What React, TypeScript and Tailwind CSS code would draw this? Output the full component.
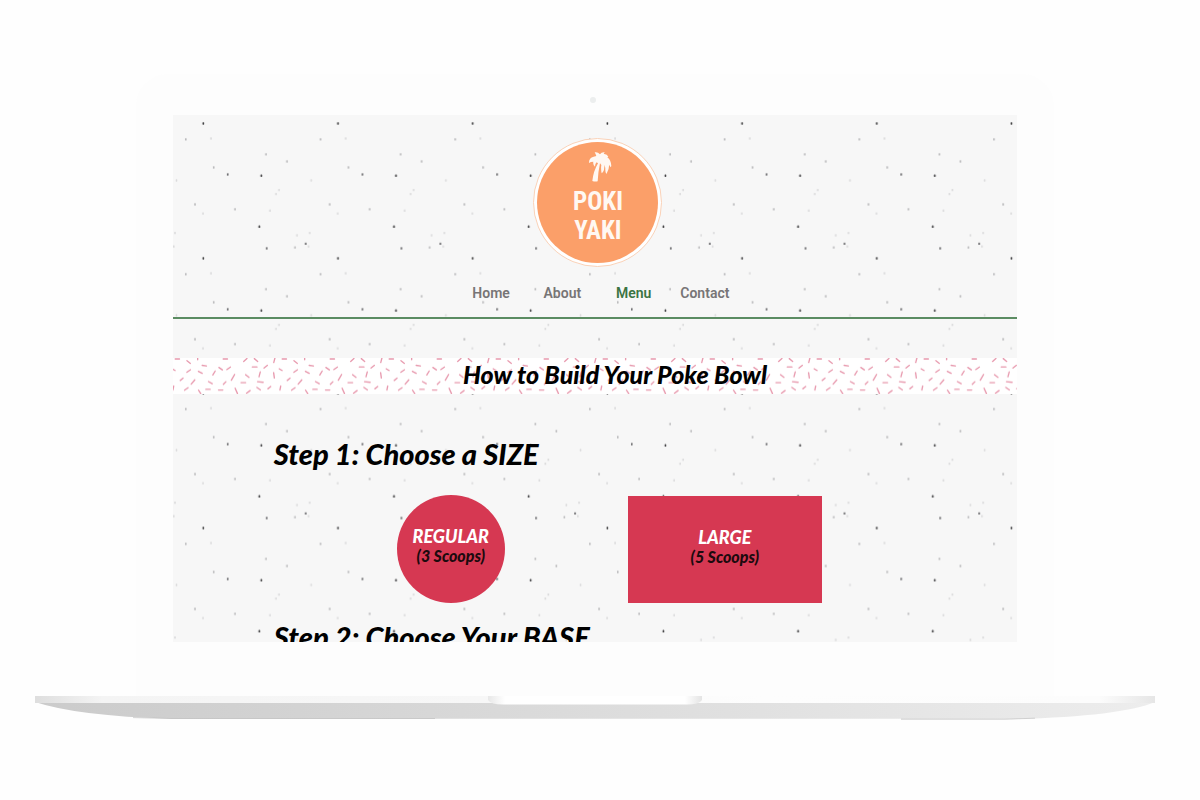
import React from "react";

type Dot = [x: number, y: number, color: string];

const DARK = "#39393b";
const MID = "#666669";
const SOFT = "#b8b8ba";
const FAINT = "#dadadb";

const dots: Dot[] = [
  [30.3, 8.5, DARK], [88.3, 60.7, DARK], [86.3, 111.7, DARK],
  [93.7, 133.3, MID], [132.7, 128.7, MID], [54.7, 59.5, MID],
  [12.8, 24.3, SOFT], [93, 39.3, SOFT], [114, 46.5, SOFT], [22, 89.4, SOFT],
  [62, 94.3, SOFT], [122, 132.5, SOFT], [40.7, 52.5, SOFT],
  [38, 23.5, FAINT], [3.5, 65.5, FAINT], [106, 75, FAINT], [103, 79, FAINT],
  [97, 95.7, FAINT], [30, 98.5, FAINT], [124, 120.3, FAINT], [2, 118, FAINT], [0.8, 131.5, FAINT],
];

type Sprinkle = [x: number, y: number, angle: number, length: number];

// Positions on a 321 x 112 tile, angles in degrees.
const sprinkles: Sprinkle[] = [
  [13, 3, 0, 13], [47, 12, 38, 13], [74, 2, 90, 6], [2, 35, 30, 10], [47, 39, -35, 13],
  [94, 23, 8, 13], [82, 43, 28, 13], [123, 45, -58, 14], [143, 32, 35, 13], [157, 3, 0, 13],
  [167, 31, -35, 13], [26, 64, -38, 11], [60, 72, -50, 17], [112, 74, 30, 13], [155, 75, -45, 11],
  [180, 58, -60, 20], [40, 93, -35, 13], [80, 102, 58, 13], [105, 94, 0, 13], [143, 96, 0, 13],
  [190, 99, 66, 18], [1, 90, -78, 12], [322, 90, -78, 12], [323, 35, 30, 10], [217, 6, -42, 13],
  [249, 6, 40, 13], [245, 27, 0, 14], [278, 26, -38, 13], [304, 7, -76, 14], [223, 54, 38, 13],
  [260, 49, -75, 15], [303, 52, 82, 16], [211, 74, 0, 14], [262, 72, 6, 17], [226, 102, -38, 14],
  [257, 92, 35, 13], [289, 89, -38, 11],
];

function Speckles() {
  return (
    <svg className="absolute inset-0 h-full w-full" aria-hidden="true">
      <defs>
        <pattern id="speckles" width="134.7" height="134.85" patternUnits="userSpaceOnUse">
          {dots.map(([x, y, color], i) => (
            <rect key={i} x={x - 0.8} y={y - 1.2} width="1.6" height="2.4" rx="0.4" fill={color} />
          ))}
        </pattern>
      </defs>
      <rect width="100%" height="100%" fill="url(#speckles)" />
    </svg>
  );
}

function Sprinkles() {
  return (
    <svg className="absolute inset-0 h-full w-full" aria-hidden="true">
      <defs>
        <pattern id="sprinkles" width="321" height="112" patternUnits="userSpaceOnUse" patternTransform="scale(0.3333)">
          {sprinkles.map(([x, y, angle, length], i) => (
            <line
              key={i}
              x1={-length / 2}
              x2={length / 2}
              transform={`translate(${x} ${y}) rotate(${angle})`}
              stroke="#e797ac"
              strokeWidth="4"
              strokeLinecap="round"
            />
          ))}
        </pattern>
      </defs>
      <rect width="100%" height="100%" fill="url(#sprinkles)" />
    </svg>
  );
}

function Palm() {
  return (
    <svg className="ml-1 h-[30px] w-6" viewBox="0 0 68 90" fill="#fff8f2" aria-hidden="true">
      <path d="M18 1 Q27 -1 34 7 Q38 0 48 1 L45 6 Q55 5 59 14 L56 16 Q67 24 68 42 L66 46 L61 38 Q62 52 55 62 L53 66 Q49 60 50 48 L47 38 Q48 52 43 60 L39 64 Q36 50 38 39 L34 34 Q28 62 27 88 Q19 90 11 87 Q14 58 28 34 L24 31 Q19 35 19 44 Q12 38 14 29 Q6 29 1 33 Q0 18 15 14 L23 12 Q21 6 18 1Z" />
    </svg>
  );
}

function Logo() {
  return (
    <a
      href="#home"
      aria-label="Poki Yaki"
      className="flex size-[129px] items-center justify-center rounded-full border border-[#fad2b8] bg-white"
    >
      <span className="flex size-[121px] flex-col items-center rounded-full bg-[#fb9f69] pt-[10px]">
        <Palm />
        <span className="mt-[5px] flex flex-col items-center font-['Liberation_Sans_Narrow','Roboto_Condensed','Roboto',sans-serif] text-[25px] leading-[29px] font-bold text-[#fff8f2]">
          <span>POKI</span>
          <span>YAKI</span>
        </span>
      </span>
    </a>
  );
}

const links = ["Home", "About", "Menu", "Contact"];

function Header() {
  return (
    <header className="relative flex flex-col items-center border-b-2 border-[#5b8c62] pt-[23px] pb-[13px] pl-[6px]">
      <Logo />
      <nav className="mt-[15px] grid w-[285px] grid-cols-4">
        {links.map((label) => (
          <a
            key={label}
            href={`#${label.toLowerCase()}`}
            className={`text-center font-['Roboto',sans-serif] text-[14px] leading-[22px] font-semibold ${
              label === "Menu" ? "text-[#3c7443]" : "text-[#777576]"
            }`}
          >
            {label}
          </a>
        ))}
      </nav>
    </header>
  );
}

function SizeLabel({ name, scoops }: { name: string; scoops: string }) {
  return (
    <>
      <span className="text-[18px] leading-[20px] text-white">{name}</span>
      <span className="text-[16px] leading-[20px] text-[#1c0a0e]">{scoops}</span>
    </>
  );
}

const script = "font-['Lato',sans-serif] font-black italic";

function Screen() {
  return (
    <div className="relative aspect-[844/527] overflow-hidden bg-[#f7f7f7] text-black">
      <Speckles />
      <Header />
      <main className={`relative ${script}`}>
        <div className="relative mt-[39px] bg-white pb-1 pl-10">
          <Sprinkles />
          <h1 className="relative text-center text-[25px] leading-8">How to Build Your Poke Bowl</h1>
        </div>
        <section className="pt-[42px] pl-[101px]">
          <h2 className="text-[29px] leading-9">Step 1: Choose a SIZE</h2>
          <div className="mt-[23px] flex items-center gap-[123px] pl-[123px]">
            <button className="flex size-[108px] flex-col items-center rounded-full bg-[#d63852] pt-[31px]">
              <SizeLabel name="REGULAR" scoops="(3 Scoops)" />
            </button>
            <button className="flex h-[107px] w-[194px] flex-col items-center bg-[#d63852] pt-[31px]">
              <SizeLabel name="LARGE" scoops="(5 Scoops)" />
            </button>
          </div>
        </section>
        <section className="pt-4 pl-[101px]">
          <h2 className="text-[29px] leading-9">Step 2: Choose Your BASE</h2>
        </section>
      </main>
    </div>
  );
}

function LaptopBase() {
  return (
    <svg className="block h-auto w-full" viewBox="0 0 1120 24" aria-hidden="true">
      <defs>
        <linearGradient id="base-body">
          <stop offset="0" stopColor="#cbcbcb" />
          <stop offset="0.5" stopColor="#dcdcdc" />
          <stop offset="1" stopColor="#ededed" />
        </linearGradient>
        <linearGradient id="base-edge">
          <stop offset="0" stopColor="#dedede" />
          <stop offset="0.06" stopColor="#f4f4f4" />
          <stop offset="0.4" stopColor="#f7f7f7" />
          <stop offset="0.65" stopColor="#fdfdfd" />
          <stop offset="0.95" stopColor="#fcfcfc" />
          <stop offset="1" stopColor="#e6e6e6" />
        </linearGradient>
        <linearGradient id="base-notch">
          <stop offset="0" stopColor="#e8e8e8" />
          <stop offset="0.08" stopColor="#ffffff" />
          <stop offset="0.92" stopColor="#ffffff" />
          <stop offset="1" stopColor="#e4e4e4" />
        </linearGradient>
      </defs>
      <path d="M0 6 Q42 20 136 22.7 H866 V23.3 H970 Q1084 21 1120 6Z" fill="url(#base-body)" />
      <path d="M98 21.6 L136 22.5 H400" fill="none" stroke="#b9b9b9" strokeWidth="0.6" />
      <path d="M866 23.2 H970 L1000 22.2" fill="none" stroke="#bcbcbc" strokeWidth="0.6" />
      <rect width="1120" height="7" fill="url(#base-edge)" />
      <path d="M453 0 H667 V4 Q664 8.5 652 8.5 H468 Q456 8.5 453 4Z" fill="url(#base-notch)" />
    </svg>
  );
}

export default function App() {
  return (
    <div className="min-h-screen bg-[#fefefe] pt-[74px] pr-[45px] pl-[35px]">
      <div className="mx-auto w-full max-w-[1120px]">
        <div className="mx-auto w-[82%] rounded-t-[32px] bg-[#fdfdfd] px-[37px] pb-[54px]">
          <div className="flex h-[41px] items-center justify-center pt-[10px] pr-[3px]">
            <span className="size-[6px] rounded-full bg-[#eceeee]" />
          </div>
          <Screen />
        </div>
        <LaptopBase />
      </div>
    </div>
  );
}
